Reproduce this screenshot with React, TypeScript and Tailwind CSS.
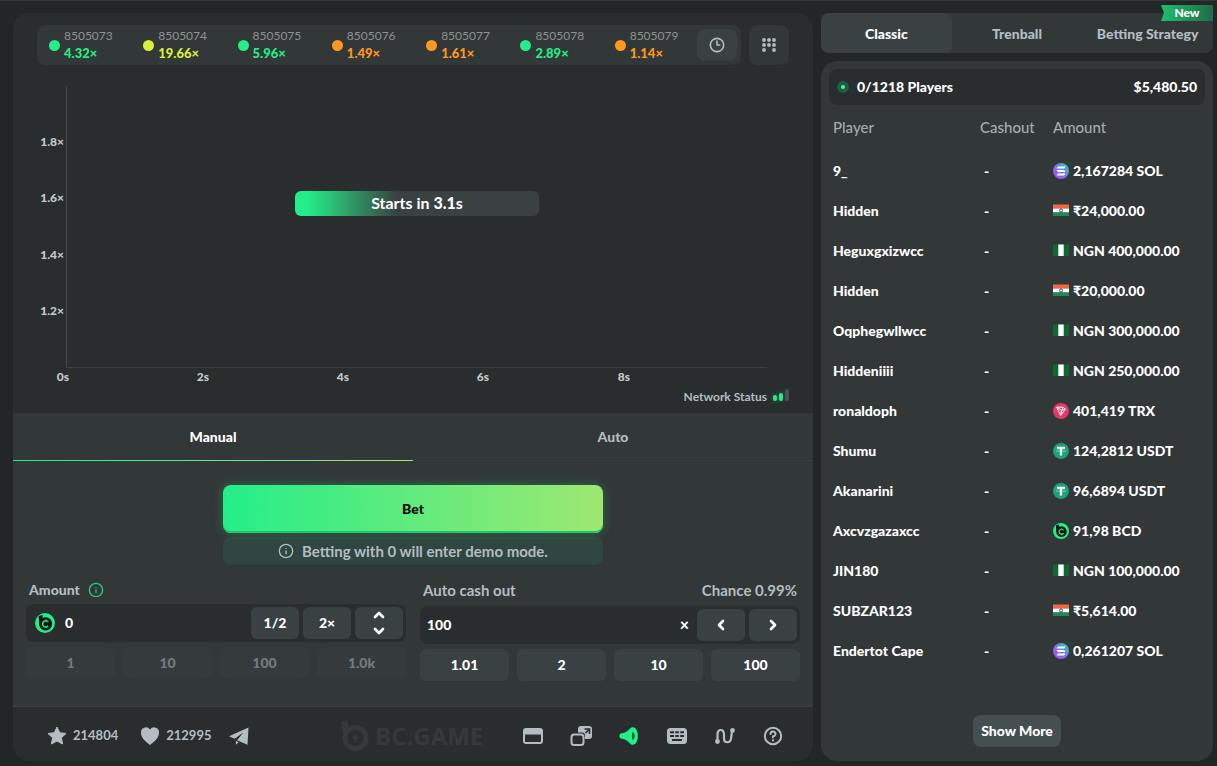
import React, { useState } from 'react';
import { ChevronDown, ChevronLeft, ChevronRight, ChevronUp, Clock3, Info } from 'lucide-react';

type Coin = 'SOL' | 'INR' | 'NGN' | 'TRX' | 'USDT' | 'BCD';

const history = [
  { id: '8505073', rate: '4.32', dot: 'bg-[#24ee89]', text: 'text-[#24ee89]' },
  { id: '8505074', rate: '19.66', dot: 'bg-[#d9f03c]', text: 'text-[#d9f03c]' },
  { id: '8505075', rate: '5.96', dot: 'bg-[#24ee89]', text: 'text-[#24ee89]' },
  { id: '8505076', rate: '1.49', dot: 'bg-[#ff9820]', text: 'text-[#ff9820]' },
  { id: '8505077', rate: '1.61', dot: 'bg-[#ff9820]', text: 'text-[#ff9820]' },
  { id: '8505078', rate: '2.89', dot: 'bg-[#24ee89]', text: 'text-[#24ee89]' },
  { id: '8505079', rate: '1.14', dot: 'bg-[#ff9820]', text: 'text-[#ff9820]' },
];

const players: { name: string; coin: Coin; amount: string }[] = [
  { name: '9_', coin: 'SOL', amount: '2,167284 SOL' },
  { name: 'Hidden', coin: 'INR', amount: '₹24,000.00' },
  { name: 'Heguxgxizwcc', coin: 'NGN', amount: 'NGN 400,000.00' },
  { name: 'Hidden', coin: 'INR', amount: '₹20,000.00' },
  { name: 'Oqphegwllwcc', coin: 'NGN', amount: 'NGN 300,000.00' },
  { name: 'Hiddeniiii', coin: 'NGN', amount: 'NGN 250,000.00' },
  { name: 'ronaldoph', coin: 'TRX', amount: '401,419 TRX' },
  { name: 'Shumu', coin: 'USDT', amount: '124,2812 USDT' },
  { name: 'Akanarini', coin: 'USDT', amount: '96,6894 USDT' },
  { name: 'Axcvzgazaxcc', coin: 'BCD', amount: '91,98 BCD' },
  { name: 'JIN180', coin: 'NGN', amount: 'NGN 100,000.00' },
  { name: 'SUBZAR123', coin: 'INR', amount: '₹5,614.00' },
  { name: 'Endertot Cape', coin: 'SOL', amount: '0,261207 SOL' },
];

const yTicks = [
  { label: '1.8×', y: 81 },
  { label: '1.6×', y: 137 },
  { label: '1.4×', y: 194 },
  { label: '1.2×', y: 250 },
];

const xTicks = [
  { label: '0s', x: 50 },
  { label: '2s', x: 190 },
  { label: '4s', x: 330 },
  { label: '6s', x: 470 },
  { label: '8s', x: 611 },
];

function BcdIcon({ className }: { className?: string }) {
  return (
    <svg viewBox="0 0 20 20" className={className} aria-hidden="true">
      <circle cx="10" cy="10" r="10" fill="#24ee89" />
      <circle cx="10.6" cy="10.8" r="6.6" fill="#101513" />
      <path d="M3.6 3.2l4-1.4v6l-3.4 3z" fill="#101513" />
      <path d="M13.2 9.1a3.1 3.1 0 1 0 0 3.6M11 6.6v1.6M11 13.6v1.6" fill="none" stroke="#24ee89" strokeWidth="1.5" />
    </svg>
  );
}

function CoinIcon({ coin }: { coin: Coin }) {
  const cls = 'h-4 w-4 shrink-0';
  if (coin === 'SOL') {
    return (
      <svg viewBox="0 0 16 16" className={cls} aria-hidden="true">
        <defs>
          <linearGradient id="sol" x1="0" y1="1" x2="1" y2="0">
            <stop offset="0" stopColor="#b03cf5" />
            <stop offset=".5" stopColor="#7a7be0" />
            <stop offset="1" stopColor="#1fd6a6" />
          </linearGradient>
        </defs>
        <circle cx="8" cy="8" r="8" fill="url(#sol)" />
        <path d="M5 3.600h7.600l-1.500 2h-7.600zM3.500 7h7.600l1.500 2H5zM5 10.400h7.600l-1.500 2h-7.600z" fill="#fff" />
      </svg>
    );
  }
  if (coin === 'INR') {
    return (
      <svg viewBox="0 0 16 16" className={cls} aria-hidden="true">
        <path d="M0 1.500h16v4H0z" fill="#f2683c" />
        <path d="M0 5.500h16v4H0z" fill="#fff" />
        <path d="M0 9.500h16V13H0z" fill="#1f8a4c" />
        <circle cx="8" cy="7.500" r="1.500" fill="none" stroke="#1d2f5e" strokeWidth=".9" />
      </svg>
    );
  }
  if (coin === 'NGN') {
    return (
      <svg viewBox="0 0 16 16" className={cls} aria-hidden="true">
        <path d="M0 1.500h16V13H0z" fill="#0b6a30" />
        <path d="M5.300 1.500h5.400V13H5.300z" fill="#fff" />
      </svg>
    );
  }
  if (coin === 'TRX') {
    return (
      <svg viewBox="0 0 16 16" className={cls} aria-hidden="true">
        <circle cx="8" cy="8" r="8" fill="#e8366b" />
        <path d="M3.800 4.200l6.600 0 2 2-4.800 6.200zM3.800 4.200l4.800 3.200M12.400 6.200l-3.800 1.200-1 5M8.600 7.400l1.800-3.200" fill="none" stroke="#fff" strokeWidth="1" strokeLinejoin="round" />
      </svg>
    );
  }
  if (coin === 'USDT') {
    return (
      <svg viewBox="0 0 16 16" className={cls} aria-hidden="true">
        <circle cx="8" cy="8" r="8" fill="#1ba27a" />
        <path d="M4 3.800h8v2H9.100v6.800H6.900V5.800H4z" fill="#fff" />
        <ellipse cx="8" cy="7.800" rx="4.600" ry="1" fill="none" stroke="#fff" strokeOpacity=".7" strokeWidth=".5" />
      </svg>
    );
  }
  return <BcdIcon className={cls} />;
}

function HistoryBar() {
  return (
    <div className="flex gap-2 px-6">
      <div className="flex h-10 min-w-0 flex-1 items-center rounded-lg bg-[#323738] pr-1">
        {history.map((item) => (
          <div key={item.id} className="flex min-w-0 flex-1 items-center gap-1 pl-3">
            <span className={`h-[11px] w-[11px] shrink-0 rounded-full ${item.dot}`} />
            <div className="flex flex-col pb-0.5">
              <span className="text-xs leading-[18px] text-[#8d9394]">{item.id}</span>
              <span className={`text-[13px] leading-4 font-black ${item.text}`}>{item.rate}×</span>
            </div>
          </div>
        ))}
        <button type="button" aria-label="History" className="flex h-8 w-10 items-center justify-center rounded-lg bg-[#3a4142]">
          <Clock3 className="h-4 w-4 text-[#b3bec1]" strokeWidth={2.4} />
        </button>
      </div>
      <button type="button" aria-label="Trends" className="flex h-10 w-10 items-center justify-center rounded-lg bg-[#323738]">
        <svg viewBox="0 0 14 14" className="h-3.5 w-3.5" fill="#b3bec1">
          {[2, 7, 12].map((x) =>
            [2, 7, 12].map((y) => (x === 7 && y === 12 ? null : <circle key={`${x}-${y}`} cx={x} cy={y} r="1.9" />)),
          )}
        </svg>
      </button>
    </div>
  );
}

function CrashChart() {
  return (
    <div className="relative">
      <svg viewBox="0 0 800 320" className="block w-full">
        <path d="M53.500 22v281" stroke="#454c4f" />
        <path d="M53 302.500h701" stroke="#3a4142" />
        <g fill="#c4cbcd" fontSize="12" fontWeight="900">
          {yTicks.map((t) => (
            <text key={t.label} x="51" y={t.y} textAnchor="end">{t.label}</text>
          ))}
          {xTicks.map((t) => (
            <text key={t.label} x={t.x} y="316" textAnchor="middle">{t.label}</text>
          ))}
        </g>
      </svg>
      {/* countdown sits over the plot */}
      <div className="absolute inset-0 flex items-center justify-center pb-11 pl-2">
        <div className="flex h-[25px] w-[244px] items-center justify-center rounded-md bg-[#3a4142] bg-[linear-gradient(90deg,#24ee89_5%,transparent_42%)] text-base font-bold text-white">
          Starts in&nbsp;<b className="font-black">3.1</b>s
        </div>
      </div>
    </div>
  );
}

function NetworkStatus() {
  return (
    <div className="flex h-7 items-start justify-end gap-1.5 px-6 text-xs font-bold leading-6 text-[#b3bec1]">
      <span>Network Status</span>
      <span className="flex h-4 items-end gap-0.5">
        <i className="h-[6px] w-1 rounded-full bg-[#24ee89] shadow-[0_0_5px_#24ee8966]" />
        <i className="h-2 w-1 rounded-full bg-[#24ee89] shadow-[0_0_5px_#24ee8966]" />
        <i className="h-3 w-1 rounded-full bg-[#4a5354]" />
      </span>
    </div>
  );
}

function BetForm() {
  const [amount, setAmount] = useState('0');
  const [cashout, setCashout] = useState('100');
  const stepBtn = 'flex h-8 w-12 shrink-0 items-center justify-center rounded-md bg-[#3a4142] text-sm font-black text-white';

  return (
    <div className="px-[13px] pt-6 pb-[25px]">
      <div className="mx-auto w-full max-w-[380px]">
        <button
          type="button"
          className="h-12 w-full rounded-lg bg-[linear-gradient(90deg,#24ee89,#9fe871)] text-sm font-black text-black shadow-[0_0_12px_#23ee884d,0_-2px_0_#1dca6a_inset]"
        >
          Bet
        </button>
        <p className="mt-1 flex h-7 items-center justify-center gap-2 rounded-lg bg-[#304640] text-[15px] font-bold text-[#b3bec1]">
          <Info className="h-4 w-4" />
          Betting with 0 will enter demo mode.
        </p>
      </div>

      <div className="mt-4 grid grid-cols-2 gap-[14px]">
        <div>
          <div className="flex h-[23px] items-center gap-2 pb-1.5 pl-[3px] text-sm font-black text-[#b3bec1]">
            <label htmlFor="amount">Amount</label>
            <Info className="h-4 w-4 text-[#24c97a]" />
          </div>
          <div className="flex h-[38px] items-center gap-1 rounded-lg bg-[#292d2e] px-[3px]">
            <BcdIcon className="ml-1.5 h-5 w-5 shrink-0" />
            <input
              id="amount"
              value={amount}
              onChange={(e) => setAmount(e.target.value)}
              className="min-w-0 flex-1 bg-transparent pl-1.5 text-sm font-black text-white outline-none"
            />
            <button type="button" className={stepBtn}>1/2</button>
            <button type="button" className={stepBtn}>2×</button>
            <button type="button" aria-label="Adjust amount" className={`${stepBtn} flex-col`}>
              <ChevronUp className="h-4 w-4" strokeWidth={4} />
              <ChevronDown className="h-4 w-4" strokeWidth={4} />
            </button>
          </div>
          <div className="mt-[5px] grid grid-cols-4 gap-2">
            {['1', '10', '100', '1.0k'].map((v) => (
              <button key={v} type="button" disabled className="h-8 rounded-md bg-[#353b3c] text-sm font-black text-[#747b7c]">
                {v}
              </button>
            ))}
          </div>
        </div>

        <div>
          <div className="flex h-[25px] items-center justify-between px-[3px] pb-1.5 text-[15px] font-bold text-[#b3bec1]">
            <label htmlFor="cashout">Auto cash out</label>
            <span>Chance 0.99%</span>
          </div>
          <div className="flex h-[38px] items-center gap-1 rounded-lg bg-[#292d2e] px-[3px]">
            <input
              id="cashout"
              value={cashout}
              onChange={(e) => setCashout(e.target.value)}
              className="min-w-0 flex-1 bg-transparent pl-1 text-sm font-black text-white outline-none"
            />
            <span className="pr-1 text-base font-black text-white">×</span>
            <button type="button" aria-label="Decrease" className={stepBtn}>
              <ChevronLeft className="h-4 w-4" strokeWidth={4} />
            </button>
            <button type="button" aria-label="Increase" className={stepBtn}>
              <ChevronRight className="h-4 w-4" strokeWidth={4} />
            </button>
          </div>
          <div className="mt-[5px] grid grid-cols-4 gap-2">
            {['1.01', '2', '10', '100'].map((v) => (
              <button key={v} type="button" className="h-8 rounded-md bg-[#3a4142] text-sm font-black text-white">
                {v}
              </button>
            ))}
          </div>
        </div>
      </div>
    </div>
  );
}

function GameFooter() {
  const iconBtn = 'flex h-10 w-12 items-center justify-center';
  return (
    <footer className="grid h-[55px] grid-cols-[1fr_auto_1fr] items-center border-t border-[#3a4142] pt-1 text-[13px] font-bold text-[#b3bec1]">
      <div className="flex items-center pl-[34px]">
        <button type="button" className="flex items-center gap-1.5">
          <svg viewBox="0 0 20 20" className="h-5 w-5" fill="#b3bec1" stroke="#b3bec1" strokeLinejoin="round">
            <path d="M10 1l2.700 5.700 6.300.8-4.600 4.300 1.200 6.200L10 15l-5.600 3 1.200-6.200L1 7.500l6.300-.8z" />
          </svg>
          214804
        </button>
        <button type="button" className="ml-[22px] flex items-center gap-1.5">
          <svg viewBox="0 0 20 20" className="h-5 w-5" fill="#b3bec1">
            <path d="M10 19C6 16 1 12 1 7a5 5 0 0 1 9-3.500A5 5 0 0 1 19 7c0 5-5 9-9 12z" />
          </svg>
          212995
        </button>
        <button type="button" aria-label="Share" className="ml-4">
          <svg viewBox="0 0 22 20" className="h-5 w-[22px]" fill="#b3bec1">
            <path d="M20.500 1.500L1 10.300l5.700 2.500 8.600-6.300-6.200 7.700 10.400 4.600z" />
            <path d="M7.800 14.800l2.800 1.500-2.600 2.500z" />
          </svg>
        </button>
      </div>

      <div className="flex w-36 items-center gap-1.5 text-[#343a3b]">
        <svg viewBox="0 0 28 32" className="h-8 w-7 shrink-0" aria-hidden="true">
          <path d="M0 2l7-2v10L2 14z" fill="currentColor" />
          <circle cx="14.500" cy="18" r="10.500" fill="none" stroke="currentColor" strokeWidth="5" />
          <path d="M14.500 13l1.600 3.400 3.400 1.600-3.400 1.600-1.600 3.400-1.600-3.400L9.500 18l3.400-1.600z" fill="currentColor" />
        </svg>
        <span className="font-['Open_Sans',sans-serif] text-2xl font-bold leading-8">BC.GAME</span>
      </div>

      <div className="flex justify-end pr-4">
        <button type="button" aria-label="Theatre mode" className={iconBtn}>
          <svg viewBox="0 0 20 16" className="h-4 w-5">
            <rect x="1" y="1" width="18" height="14" rx="2" fill="none" stroke="#b3bec1" strokeWidth="2" />
            <path d="M1 2h18v4.500H1z" fill="#b3bec1" />
          </svg>
        </button>
        <button type="button" aria-label="Pop out" className={iconBtn}>
          <svg viewBox="0 0 22 20" className="h-5 w-[22px]">
            <rect x="8" y="0" width="14" height="13" rx="3" fill="#b3bec1" />
            <rect x="0" y="6.500" width="15" height="13.500" rx="3" fill="#292d2e" />
            <rect x="1.500" y="8.500" width="12" height="10.500" rx="2.500" fill="#292d2e" stroke="#b3bec1" strokeWidth="2" />
            <path d="M15.500 7l3-3M14.500 3h5v5" fill="none" stroke="#292d2e" strokeWidth="1.600" />
          </svg>
        </button>
        <button type="button" aria-label="Sound" className={iconBtn}>
          <svg viewBox="0 0 20 18" className="h-[18px] w-5">
            <path d="M3 6.200C6 6 9 4 11 1.500 12.500-.2 15.500-.2 17 2c2.500 4 2.500 10 0 14-1.500 2.200-4.500 2.200-6 .5-2-2.500-5-4.500-8-4.700-3.500-.3-3.500-5.300 0-5.600z" fill="#24ee89" />
            <path d="M13.500 5c3 1.500 3 6.500 0 8-.8-2.200-.8-5.800 0-8z" fill="#1d5c40" />
          </svg>
        </button>
        <button type="button" aria-label="Hotkeys" className={iconBtn}>
          <svg viewBox="0 0 20 16" className="h-4 w-5">
            <rect width="20" height="16" rx="3.500" fill="#b3bec1" />
            <path d="M3 4.200h4M8.300 4.200h3.500M13.200 4.200h3.800M3 8h4M8.300 8h3.500M13.200 8h3.800M5 12h10" stroke="#292d2e" strokeWidth="2" />
          </svg>
        </button>
        <button type="button" aria-label="Live stats" className={iconBtn}>
          <svg viewBox="0 0 20 16" className="h-4 w-5" fill="none" stroke="#b3bec1" strokeWidth="2.200" strokeLinecap="round">
            <path d="M2.500 13.500V6.500c0-6 6.500-6 6.500 0v4c0 5 6.500 5 7 0l1-7" />
            <circle cx="2.500" cy="13.500" r="1.300" fill="#b3bec1" />
            <circle cx="17.500" cy="2.500" r="1.300" fill="#b3bec1" />
          </svg>
        </button>
        <button type="button" aria-label="Help" className={iconBtn}>
          <svg viewBox="0 0 20 20" className="h-5 w-5" fill="none" stroke="#b3bec1" strokeWidth="2" strokeLinecap="round">
            <circle cx="10" cy="10" r="8.200" />
            <path d="M7.500 8A2.500 2.500 0 1 1 10 10.400v1.200" />
            <path d="M10 14.300v.1" strokeWidth="2.200" />
          </svg>
        </button>
      </div>
    </footer>
  );
}

function PlayersPanel() {
  return (
    <section className="flex flex-1 flex-col rounded-2xl bg-[#323738] p-2">
      <div className="flex h-9 items-center justify-between rounded-lg bg-[#292d2e] px-2 text-sm font-black text-white">
        <span className="flex items-center gap-2">
          <i className="flex h-3 w-3 items-center justify-center rounded-full bg-[#1c5f41]">
            <i className="h-1 w-1 rounded-full bg-[#4df5a2]" />
          </i>
          0/1218 Players
        </span>
        <span>$5,480.50</span>
      </div>

      <table className="ml-1 table-fixed text-left text-sm">
        <thead>
          <tr className="h-[46px] text-[15px] text-[#a3adb0]">
            <th className="w-[147px] font-medium">Player</th>
            <th className="w-[73px] font-medium">Cashout</th>
            <th className="font-medium">Amount</th>
          </tr>
        </thead>
        <tbody className="font-black text-white">
          {players.map((p, i) => (
            <tr key={i} className="h-10">
              <td>{p.name}</td>
              <td className="pl-1">-</td>
              <td>
                <span className="flex items-center gap-1">
                  <CoinIcon coin={p.coin} />
                  {p.amount}
                </span>
              </td>
            </tr>
          ))}
        </tbody>
      </table>

      <div className="mt-auto flex justify-center pb-1.5">
        <button type="button" className="h-8 rounded-lg bg-[#464f50] px-2 text-sm font-black text-white">
          Show More
        </button>
      </div>
    </section>
  );
}

export default function App() {
  const [tab, setTab] = useState('Classic');

  return (
    <div className="flex min-h-screen gap-2 border-t border-[#323738] bg-[#232626] pt-3 pr-1 pb-[5px] pl-[13px] font-['Lato','Noto_Sans',sans-serif]">
      <main className="flex min-w-0 flex-1 flex-col overflow-hidden rounded-2xl bg-[#292d2e] pt-3">
        <HistoryBar />
        <CrashChart />
        <NetworkStatus />
        <div className="flex-1 bg-[#323738]">
          <div className="flex h-12 border-b border-[#3a4142] text-sm font-black">
            <button type="button" className="-mb-px flex-1 border-b border-transparent bg-[linear-gradient(90deg,#24ee89,#9fe871)] bg-[length:100%_1px] bg-bottom bg-no-repeat bg-origin-border text-white">
              Manual
            </button>
            <button type="button" className="flex-1 text-[#b3bec1]">Auto</button>
          </div>
          <BetForm />
        </div>
        <GameFooter />
      </main>

      <aside className="flex w-[392px] shrink-0 flex-col gap-2">
        <div className="relative grid h-10 grid-cols-3 rounded-lg bg-[#323738] text-sm font-black">
          {['Classic', 'Trenball', 'Betting Strategy'].map((name) => (
            <button
              key={name}
              type="button"
              onClick={() => setTab(name)}
              className={`rounded-lg pt-0.5 whitespace-nowrap ${tab === name ? 'bg-[#3a4142] text-white' : 'text-[#b3bec1]'}`}
            >
              {name}
            </button>
          ))}
          <span className="absolute -top-2 right-0 flex h-4 w-[52px] items-center justify-center bg-[linear-gradient(90deg,#1fbf6c,#1f6b48)] text-xs font-black text-white [clip-path:polygon(0_0,100%_0,100%_100%,0_100%,3px_50%)]">
            New
          </span>
        </div>
        <PlayersPanel />
      </aside>
    </div>
  );
}
